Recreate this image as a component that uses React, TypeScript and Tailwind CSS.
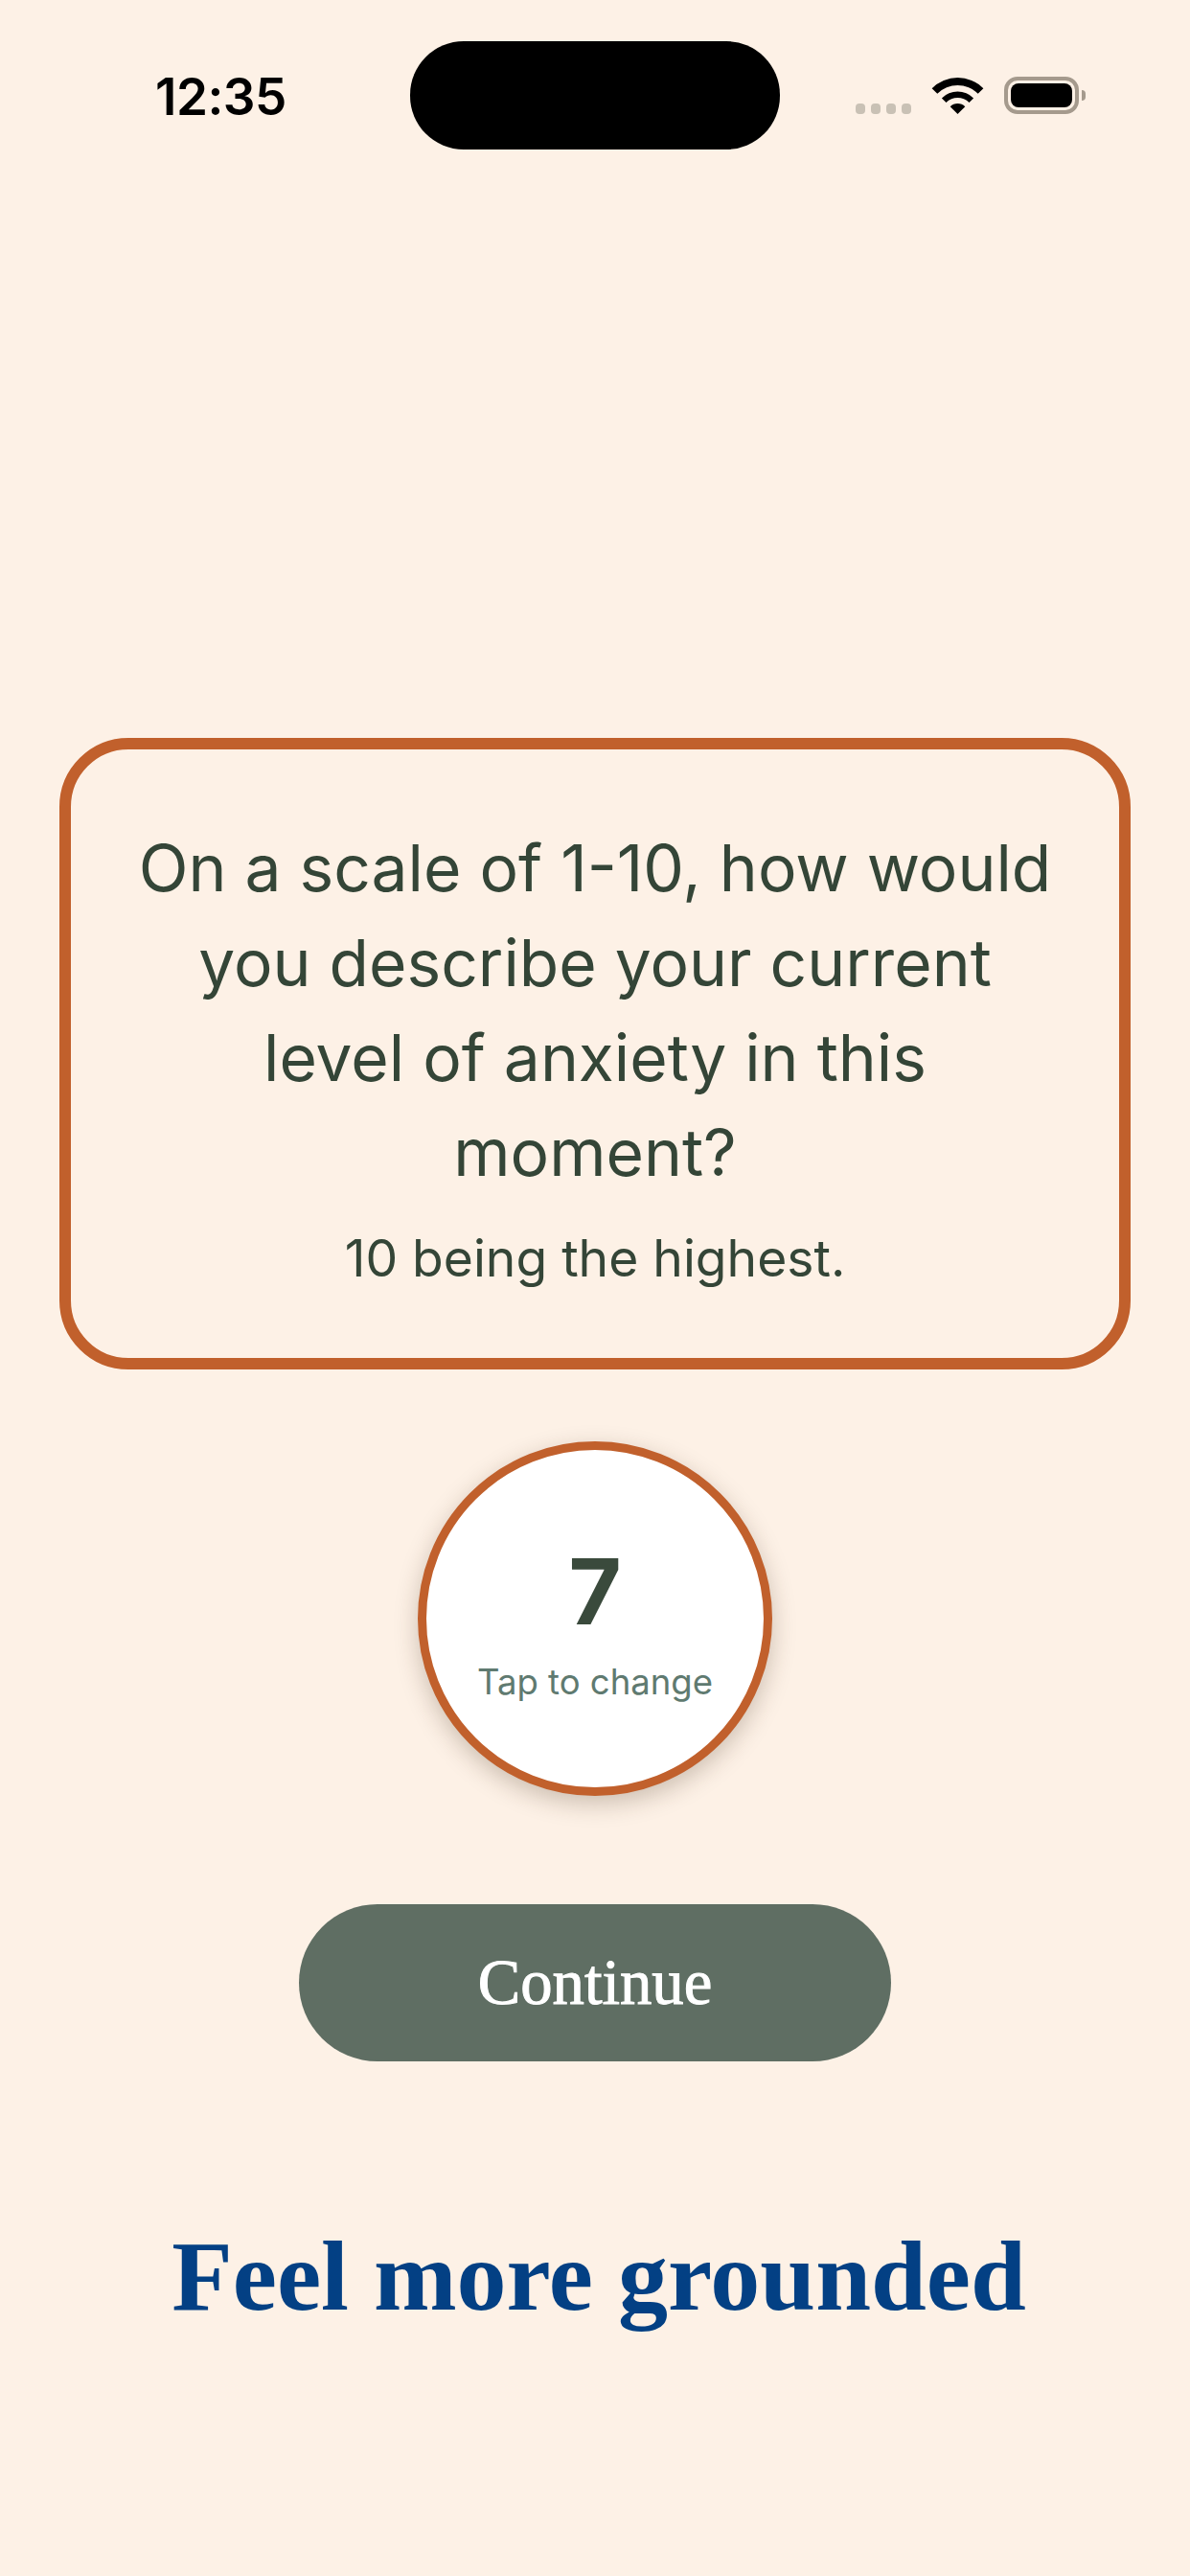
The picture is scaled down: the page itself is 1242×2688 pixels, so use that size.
import React from 'react';

function WifiIcon() {
  return (
    <svg width="53" height="38" viewBox="0 0 53 38" fill="#000" className="overflow-visible">
      <path d="M-0.37 11.13A38 38 0 0 1 53.37 11.13L47.7 16.8A30 30 0 0 0 5.3 16.8Z" />
      <path d="M9.9 21.4A23.5 23.5 0 0 1 43.1 21.4L38.5 26A17 17 0 0 0 14.5 26Z" />
      <path d="M18.7 30.2A11 11 0 0 1 34.3 30.2L26.5 38Z" />
    </svg>
  );
}

function BatteryIcon() {
  return (
    <div className="flex items-center gap-[3px]">
      <div className="w-[78px] h-[39px] rounded-[14px] border-[4px] border-[#a59a8d] p-[3px]">
        <div className="w-full h-full rounded-[8px] bg-black" />
      </div>
      <div className="w-[4px] h-[11px] rounded-r-full bg-[#a59a8d]" />
    </div>
  );
}

export default function App() {
  return (
    <div className="min-h-[2688px] bg-[#fdf1e6] flex flex-col items-center [font-family:Inter,sans-serif]">
      {/* Status bar */}
      <header className="w-full h-[113px] mt-[43px] grid grid-cols-[1fr_386px_1fr]">
        <div className="pl-[162px] pt-[33px]">
          <span className="block text-[53px] font-semibold text-black leading-[50px] tracking-[-0.5px]">12:35</span>
        </div>
        <div className="h-[113px] rounded-[56px] bg-black" />
        <div className="flex items-end justify-end gap-[22px] h-[76px] pr-[109px]">
          <div className="flex gap-[6px]">
            <div className="w-[10px] h-[11px] rounded-[4px] bg-[#c9c1b5]" />
            <div className="w-[10px] h-[11px] rounded-[4px] bg-[#c9c1b5]" />
            <div className="w-[10px] h-[11px] rounded-[4px] bg-[#c9c1b5]" />
            <div className="w-[10px] h-[11px] rounded-[4px] bg-[#c9c1b5]" />
          </div>
          <WifiIcon />
          <BatteryIcon />
        </div>
      </header>

      {/* Question card */}
      <section className="w-[1118px] h-[659px] mt-[614px] rounded-[72px] border-[12px] border-[#c1602c] flex flex-col items-center pt-[74px] text-[#344537] text-center">
        <p className="w-[1040px] text-[67.7px] leading-[99px]">
          On a scale of 1-10, how would<br />you describe your current<br />level of anxiety in this<br />moment?
        </p>
        <p className="text-[53.4px] leading-[70px] mt-[26px]">10 being the highest.</p>
      </section>

      {/* Rating circle */}
      <button className="w-[370px] h-[370px] mt-[75px] rounded-full bg-white border-[9px] border-[#c1602c] shadow-[0_8px_24px_rgba(60,40,20,0.25)] flex flex-col items-center pt-[98px]">
        <span className="text-[95px] leading-[100px] font-bold text-[#3a4a3c]">7</span>
        <span className="text-[36.5px] leading-[44px] mt-[22px] text-[#5f7a70]">Tap to change</span>
      </button>

      {/* Continue */}
      <button className="w-[618px] h-[164px] mt-[113px] rounded-full bg-[#5f6e63] text-white text-[66.7px] [-webkit-text-stroke:1px_white] [font-family:'Liberation_Serif',serif]">
        Continue
      </button>

      <h1 className="mt-[164px] ml-[8px] text-[104px] leading-[120px] font-bold text-[#034084] [font-family:'Liberation_Serif',serif]">
        Feel more grounded
      </h1>
    </div>
  );
}
